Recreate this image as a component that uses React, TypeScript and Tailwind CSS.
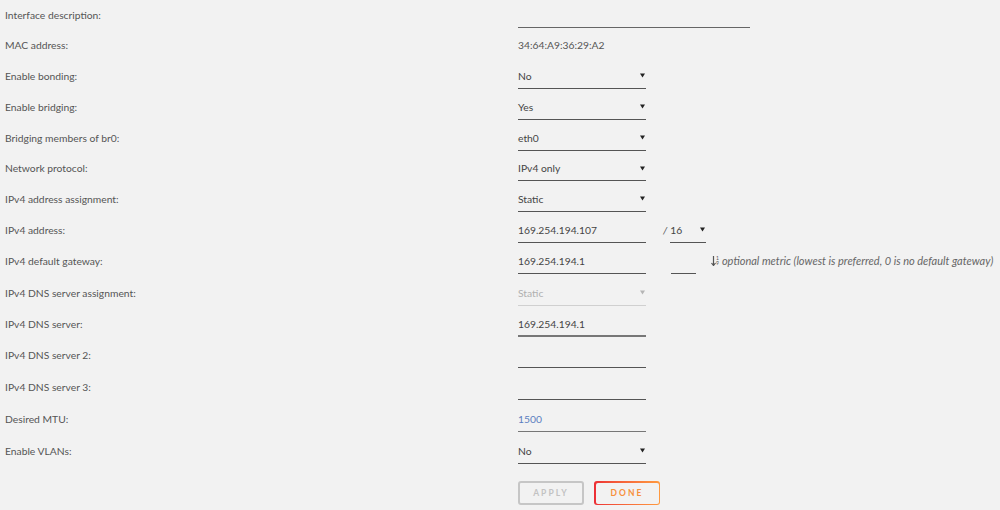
import React from "react";

function Caret({ light }: { light?: boolean }) {
  return (
    <svg width="5" height="5" viewBox="0 0 5 5" className="shrink-0">
      <path d="M0 0.5 L5 0.5 L2.5 4.5 Z" fill={light ? "#b5b5b5" : "#222"} />
    </svg>
  );
}

type RowProps = { label: string; h: string; children?: React.ReactNode };

function Row({ label, h, children }: RowProps) {
  return (
    <div className={`flex items-center ${h}`}>
      <div className="w-[518px] shrink-0 pl-[5px] text-[10.3px] leading-[14px] text-[#555]">{label}</div>
      <div className="flex items-center">{children}</div>
    </div>
  );
}

function Field({ value, w = "w-[128px]", color = "text-[#444]", line = "border-[#555]" }: { value?: string; w?: string; color?: string; line?: string }) {
  return (
    <div className={`${w} h-[26px] pt-[6px] pb-[5px] border-b ${line} text-[10.3px] leading-[14px] ${color}`}>{value}</div>
  );
}

function Select({ value, w = "w-[128px]", light }: { value: string; w?: string; light?: boolean }) {
  return (
    <div className={`${w} h-[26px] pt-[6px] pb-[5px] border-b ${light ? "border-[#d0d0d0] text-[#b0b0b0]" : "border-[#555] text-[#444]"} flex items-center justify-between pr-[1px] text-[10.3px] leading-[14px]`}>
      <span>{value}</span>
      <Caret light={light} />
    </div>
  );
}

export default function App() {
  return (
    <div className="w-[1000px] h-[510px] bg-[#f2f2f2] overflow-hidden" style={{ fontFamily: "Lato, 'Noto Sans', sans-serif" }}>
      <Row label="Interface description:" h="h-[30px]">
        <Field w="w-[232px]" line="border-[#666]" />
      </Row>
      <Row label="MAC address:" h="h-[30px]">
        <div className="text-[10.3px] leading-[14px] text-[#555]">34:64:A9:36:29:A2</div>
      </Row>
      <Row label="Enable bonding:" h="h-[31px]">
        <Select value="No" />
      </Row>
      <Row label="Enable bridging:" h="h-[31px]">
        <Select value="Yes" />
      </Row>
      <Row label="Bridging members of br0:" h="h-[31px]">
        <Select value="eth0" />
      </Row>
      <Row label="Network protocol:" h="h-[30px]">
        <Select value="IPv4 only" />
      </Row>
      <Row label="IPv4 address assignment:" h="h-[31px]">
        <Select value="Static" />
      </Row>
      <Row label="IPv4 address:" h="h-[31px]">
        <Field value="169.254.194.107" />
        <span className="ml-[17px] mr-[3px] text-[10.3px] leading-[14px] text-[#555] italic">/</span>
        <Select value="16" w="w-[36px]" />
      </Row>
      <Row label="IPv4 default gateway:" h="h-[32px]">
        <Field value="169.254.194.1" />
        <div className="ml-[25px]">
          <Field w="w-[25px]" />
        </div>
        <div className="ml-[15px] flex items-center text-[#666]">
          <div className="flex items-center mr-[3px]">
            <svg width="5" height="10" viewBox="0 0 5 10">
              <path d="M2.5 0 V9 M0.5 7 L2.5 9.5 L4.5 7" stroke="#555" strokeWidth="1.2" fill="none" />
            </svg>
            <div className="flex flex-col text-[5px] leading-[5px] text-[#555]">
              <span>1</span>
              <span>9</span>
            </div>
          </div>
          <span className="text-[11px] leading-[14px] italic">optional metric (lowest is preferred, 0 is no default gateway)</span>
        </div>
      </Row>
      <Row label="IPv4 DNS server assignment:" h="h-[31px]">
        <Select value="Static" light />
      </Row>
      <Row label="IPv4 DNS server:" h="h-[31px]">
        <Field value="169.254.194.1" line="border-b-2 border-[#777]" />
      </Row>
      <Row label="IPv4 DNS server 2:" h="h-[32px]">
        <Field />
      </Row>
      <Row label="IPv4 DNS server 3:" h="h-[31px]">
        <Field />
      </Row>
      <Row label="Desired MTU:" h="h-[33px]">
        <Field value="1500" color="text-[#5a7ec0]" line="border-[#777]" />
      </Row>
      <Row label="Enable VLANs:" h="h-[31px]">
        <Select value="No" />
      </Row>
      <div className="flex pl-[518px] pt-[15px] gap-[10px]">
        <button className="w-[66px] h-[24px] border-2 border-[#c6c6c6] rounded-[3px] text-[8.5px] font-bold tracking-[2px] text-[#c2c2c2] bg-[#f2f2f2]">
          APPLY
        </button>
        <div className="w-[66px] h-[24px] rounded-[3px] p-[1.5px] bg-gradient-to-r from-[#ec2d35] to-[#ff9a40]">
          <div className="w-full h-full rounded-[2px] bg-[#f2f2f2] flex items-center justify-center text-[8.5px] font-bold tracking-[2px] text-[#f7903c]">
            DONE
          </div>
        </div>
      </div>
    </div>
  );
}
